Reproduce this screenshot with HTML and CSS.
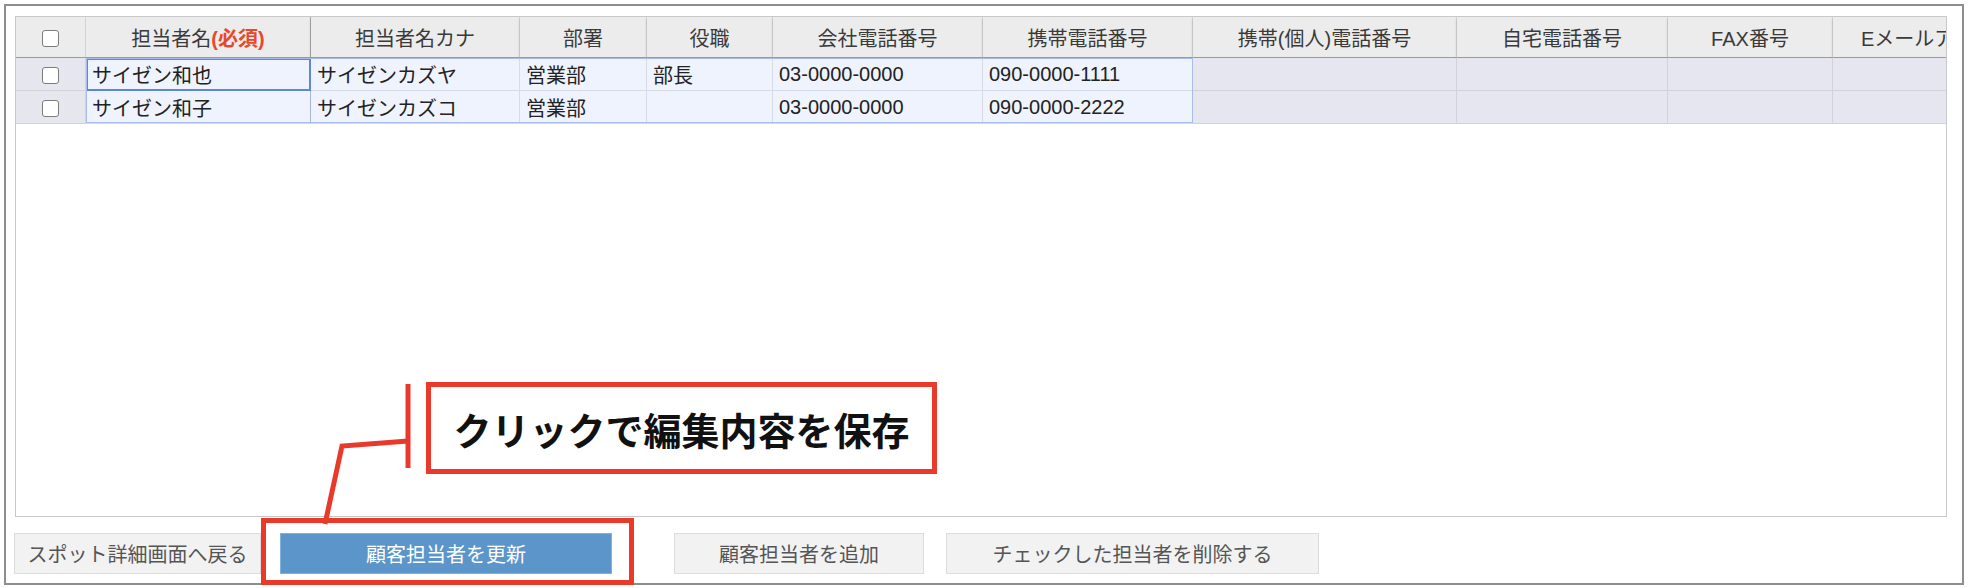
FILE: index.html
```html
<!DOCTYPE html>
<html lang="ja">
<head>
    <meta charset="UTF-8">
    <title>顧客担当者</title>
    <link rel="stylesheet" href="styles.css">
</head>
<body>
    <div class="frame">
        <div class="grid">
            <table class="sheet">
                <colgroup>
                    <col class="c-cb">
                    <col class="c-name">
                    <col class="c-kana">
                    <col class="c-dept">
                    <col class="c-title">
                    <col class="c-tel">
                    <col class="c-mobile">
                    <col class="c-pmobile">
                    <col class="c-home">
                    <col class="c-fax">
                    <col class="c-mail">
                </colgroup>
                <thead>
                    <tr>
                        <th><span class="cb"></span></th>
                        <th class="frozen">担当者名<b class="req">(必須)</b></th>
                        <th>担当者名カナ</th>
                        <th>部署</th>
                        <th>役職</th>
                        <th>会社電話番号</th>
                        <th>携帯電話番号</th>
                        <th>携帯(個人)電話番号</th>
                        <th>自宅電話番号</th>
                        <th>FAX番号</th>
                        <th class="mail">Eメールアドレス</th>
                    </tr>
                </thead>
                <tbody>
                    <tr>
                        <td class="sel"><span class="cb"></span></td>
                        <td class="edit frozen active">サイゼン和也</td>
                        <td class="edit">サイゼンカズヤ</td>
                        <td class="edit">営業部</td>
                        <td class="edit">部長</td>
                        <td class="edit">03-0000-0000</td>
                        <td class="edit">090-0000-1111</td>
                        <td class="ro"></td>
                        <td class="ro"></td>
                        <td class="ro"></td>
                        <td class="ro"></td>
                    </tr>
                    <tr>
                        <td class="sel"><span class="cb"></span></td>
                        <td class="edit frozen">サイゼン和子</td>
                        <td class="edit">サイゼンカズコ</td>
                        <td class="edit">営業部</td>
                        <td class="edit"></td>
                        <td class="edit">03-0000-0000</td>
                        <td class="edit">090-0000-2222</td>
                        <td class="ro"></td>
                        <td class="ro"></td>
                        <td class="ro"></td>
                        <td class="ro"></td>
                    </tr>
                </tbody>
            </table>
            <div class="range"></div>
        </div>

        <div class="actions">
            <button class="btn btn-back">スポット詳細画面へ戻る</button>
            <button class="btn btn-save">顧客担当者を更新</button>
            <button class="btn btn-add">顧客担当者を追加</button>
            <button class="btn btn-del">チェックした担当者を削除する</button>
        </div>
    </div>

    <!-- annotation -->
    <div class="note">クリックで編集内容を保存</div>
    <div class="note-target"></div>
    <svg class="note-line" width="1970" height="588" viewBox="0 0 1970 588">
        <line x1="408" y1="384" x2="408" y2="468" stroke="#e8392a" stroke-width="5"/>
        <polyline points="408,441 342,446 325,524" fill="none" stroke="#e8392a" stroke-width="5"/>
    </svg>
</body>
</html>
```

FILE: styles.css
```css
body {
    margin: 0;
    background: #fff;
    font-family: "Liberation Sans", "Noto Sans CJK JP", sans-serif;
    color: #222;
    width: 1970px;
    height: 588px;
    overflow: hidden;
    position: relative;
}

.frame {
    box-sizing: border-box;
    margin: 4px 0 0 4px;
    width: 1960px;
    height: 581px;
    border: 2px solid #8e8e8e;
    padding: 10px 15px 0 9px;
    display: flex;
    flex-direction: column;
}

.grid {
    position: relative;
    height: 499px;
    border: 1px solid #c9c9c9;
    overflow: hidden;
    flex: none;
}

.sheet {
    table-layout: fixed;
    border-collapse: separate;
    border-spacing: 0;
    width: 2117px;
    font-size: 20px;
}

.c-cb { width: 70px; }
.c-name { width: 225px; }
.c-kana { width: 209px; }
.c-dept { width: 127px; }
.c-title { width: 126px; }
.c-tel { width: 210px; }
.c-mobile { width: 210px; }
.c-pmobile { width: 264px; }
.c-home { width: 211px; }
.c-fax { width: 165px; }
.c-mail { width: 300px; }

.sheet th {
    height: 40px;
    background: #ececec;
    color: #3a3a3a;
    font-weight: normal;
    text-align: center;
    border-right: 1px solid #d4d4d4;
    border-bottom: 1px solid #9a9a9a;
    box-shadow: 0 2px 3px rgba(0, 0, 0, 0.18);
    padding: 0;
    white-space: nowrap;
    overflow: hidden;
}

.sheet th.mail {
    text-align: left;
    padding-left: 28px;
}

.sheet th.frozen {
    border-right: 1px solid #a8a8a8;
    box-shadow: 2px 2px 3px rgba(0, 0, 0, 0.2);
}

.req {
    color: #e8472b;
}

.sheet td {
    height: 32px;
    padding: 0 6px;
    border-right: 1px solid #d2d2d8;
    border-bottom: 1px solid #d2d2d8;
    white-space: nowrap;
    overflow: hidden;
}

.sheet td.sel {
    background: #e6e7ee;
    text-align: center;
    padding: 0;
}

.sheet td.edit {
    background: #eff3fd;
    border-color: #d6dbe6;
}

.sheet td.frozen {
    border-right: 1px solid #a9b8d8;
}

.sheet td.ro {
    background: #e5e6ef;
}

.sheet td.active {
    outline: 2px solid #5d88d9;
    outline-offset: -2px;
}

.range {
    position: absolute;
    left: 70px;
    top: 41px;
    width: 1107px;
    height: 65px;
    border: 1px solid #a8bdee;
    box-sizing: border-box;
    pointer-events: none;
}

.cb {
    display: inline-block;
    width: 15px;
    height: 15px;
    border: 1px solid #7c7c7c;
    border-radius: 3px;
    background: #fff;
    vertical-align: middle;
}

.actions {
    display: flex;
    align-items: center;
    margin-top: 16px;
    margin-left: -1px;
}

.btn {
    height: 41px;
    border: 1px solid #dcdcdc;
    background: #f2f2f2;
    color: #555;
    font-family: "Liberation Sans", "Noto Sans CJK JP", sans-serif;
    font-size: 20px;
    padding: 0;
}

.btn-back { width: 247px; }
.btn-save {
    width: 332px;
    margin-left: 19px;
    background: #5b95c9;
    border-color: #7fb1de;
    color: #fff;
}
.btn-add { width: 250px; margin-left: 62px; }
.btn-del { width: 373px; margin-left: 22px; }

.note {
    position: absolute;
    left: 426px;
    top: 382px;
    width: 511px;
    height: 92px;
    box-sizing: border-box;
    border: 5px solid #e8392a;
    background: #fff;
    display: flex;
    align-items: center;
    justify-content: center;
    font-family: "Noto Sans CJK JP", sans-serif;
    font-weight: bold;
    font-size: 38px;
    color: #111;
}

.note-target {
    position: absolute;
    left: 261px;
    top: 518px;
    width: 373px;
    height: 67px;
    box-sizing: border-box;
    border: 5px solid #e8392a;
}

.note-line {
    position: absolute;
    left: 0;
    top: 0;
    pointer-events: none;
}
```
